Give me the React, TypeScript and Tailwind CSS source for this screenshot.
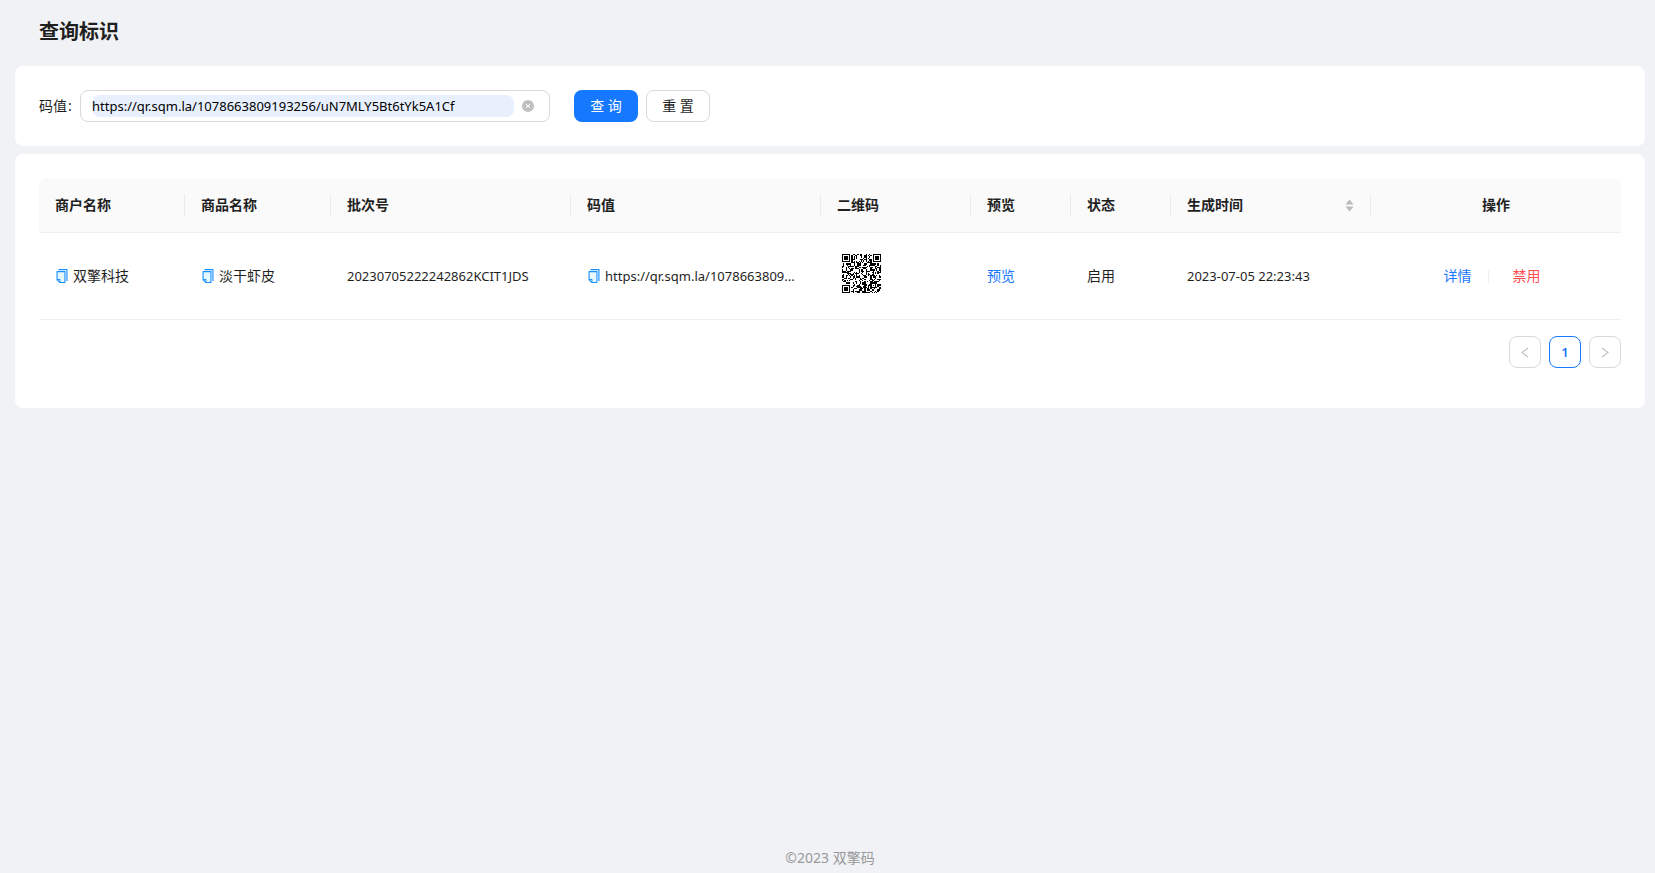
import { useState } from "react";
import type { ReactNode } from "react";

const QR_SIZE = 33;

function inFinder(x: number, y: number, ox: number, oy: number) {
  return x >= ox - 1 && x <= ox + 7 && y >= oy - 1 && y <= oy + 7;
}

function squareRing(x: number, y: number, cx: number, cy: number) {
  return Math.max(Math.abs(x - cx), Math.abs(y - cy));
}

function buildQrPath() {
  let seed = 20230705;
  let path = "";
  const corners = [
    [0, 0],
    [QR_SIZE - 7, 0],
    [0, QR_SIZE - 7],
  ];
  for (let y = 0; y < QR_SIZE; y++) {
    for (let x = 0; x < QR_SIZE; x++) {
      seed = (seed * 1103515245 + 12345) % 2147483648;
      let dark = (seed >> 12) % 100 < 49;
      const corner = corners.find(([ox, oy]) => inFinder(x, y, ox, oy));
      const align = squareRing(x, y, QR_SIZE - 7, QR_SIZE - 7);
      if (corner) {
        const ring = squareRing(x, y, corner[0] + 3, corner[1] + 3);
        dark = ring <= 1 || ring === 3;
      } else if (align <= 2) {
        dark = align !== 1;
      } else if (x === 6 || y === 6) {
        dark = (x + y) % 2 === 0;
      }
      if (dark) path += `M${x} ${y}h1v1h-1z`;
    }
  }
  return path;
}

const QR_PATH = buildQrPath();

function QrCode() {
  return (
    <svg
      role="img"
      aria-label="二维码"
      className="m-[5px] size-[39px]"
      viewBox={`0 0 ${QR_SIZE} ${QR_SIZE}`}
      shapeRendering="crispEdges"
    >
      <path d={QR_PATH} fill="#000" />
    </svg>
  );
}

function CopyIcon() {
  return (
    <svg viewBox="64 64 896 896" className="size-[14px]" aria-hidden="true">
      <path fill="#e6f7ff" d="M232 706h142c22.1 0 40 17.9 40 40v142h250V264H232v442z" />
      <path
        fill="#1890ff"
        d="M832 64H296c-4.4 0-8 3.6-8 8v56c0 4.4 3.6 8 8 8h496v688c0 4.4 3.6 8 8 8h56c4.4 0 8-3.6 8-8V96c0-17.7-14.3-32-32-32z"
      />
      <path
        fill="#1890ff"
        d="M704 192H192c-17.7 0-32 14.3-32 32v530.7c0 8.5 3.4 16.6 9.4 22.6l173.3 173.3c2.2 2.2 4.7 4 7.4 5.5v1.9h4.2c3.5 1.3 7.2 2 11 2H704c17.7 0 32-14.3 32-32V224c0-17.7-14.3-32-32-32zM350 856.2L263.9 770H350v86.2zM664 888H414V746c0-22.1-17.9-40-40-40H232V264h432v624z"
      />
    </svg>
  );
}

function Copyable({ children }: { children: ReactNode }) {
  return (
    <div className="flex items-center gap-1">
      <button type="button" aria-label="复制" className="shrink-0 cursor-pointer">
        <CopyIcon />
      </button>
      <span className="min-w-0 truncate">{children}</span>
    </div>
  );
}

function ClearIcon() {
  return (
    <svg viewBox="0 0 12 12" className="size-3" aria-hidden="true">
      <circle cx="6" cy="6" r="6" fill="#bfbfbf" />
      <path d="M4.2 4.2l3.6 3.6M7.8 4.2l-3.6 3.6" stroke="#fff" strokeWidth="1" strokeLinecap="round" />
    </svg>
  );
}

function SortIcon() {
  return (
    <svg viewBox="0 0 10 13" className="h-[13px] w-[10px]" aria-hidden="true">
      <path d="M4.5 0.5L8.5 5.5H0.5z" fill="#bababa" />
      <path d="M4.5 12.5L8.5 7.5H0.5z" fill="#bababa" />
    </svg>
  );
}

function Chevron({ d }: { d: string }) {
  return (
    <svg viewBox="0 0 12 12" className="size-3" fill="none" stroke="currentColor" aria-hidden="true">
      <path d={d} strokeWidth="1.1" />
    </svg>
  );
}

function HeadCell({ children, last = false }: { children: ReactNode; last?: boolean }) {
  return (
    <th
      scope="col"
      className={`relative h-[55px] border-b border-[#f0f0f0] bg-[#fafafa] px-4 font-bold text-[#1f1f1f] ${
        last
          ? "rounded-tr-lg text-center"
          : "text-left after:absolute after:top-4 after:right-0 after:h-[22px] after:w-px after:bg-[#ebebeb] first:rounded-tl-lg"
      }`}
    >
      {children}
    </th>
  );
}

const cell = "border-b border-[#f0f0f0] p-4";
const pageButton = "flex size-8 items-center justify-center rounded-lg border";

export default function App() {
  const initial = "https://qr.sqm.la/1078663809193256/uN7MLY5Bt6tYk5A1Cf";
  const [code, setCode] = useState(initial);

  return (
    <div className="flex min-h-screen flex-col bg-[#f0f2f5] pr-[10px] pl-[15px] font-['Noto_Sans','Noto_Sans_CJK_SC',sans-serif] text-[14px] leading-[22px] text-[#1f1f1f]">
      <header className="px-6 pt-4 pb-[18px]">
        <h1 className="text-[20px] leading-8 font-bold">查询标识</h1>
      </header>

      <main className="flex flex-1 flex-col gap-2">
        <form
          className="flex items-center rounded-lg bg-white p-6"
          onSubmit={(event) => event.preventDefault()}
        >
          <label htmlFor="code" className="w-[41px] whitespace-nowrap">
            码值<span className="pl-px">:</span>
          </label>
          <div className="flex h-8 w-[470px] items-center rounded-lg border border-[#d9d9d9] px-[11px]">
            <input
              id="code"
              type="text"
              value={code}
              onChange={(event) => setCode(event.target.value)}
              className="h-[22px] w-[422px] rounded-lg bg-[#e8f0fe] text-[13px] text-black outline-none"
            />
            <button
              type="button"
              aria-label="清除"
              className="ml-2 cursor-pointer"
              onClick={() => setCode("")}
            >
              <ClearIcon />
            </button>
          </div>
          <button
            type="submit"
            className="ml-6 h-8 w-16 cursor-pointer rounded-lg bg-[#1677ff] text-white"
          >
            查 询
          </button>
          <button
            type="button"
            className="ml-2 h-8 w-16 cursor-pointer rounded-lg border border-[#d9d9d9]"
            onClick={() => setCode(initial)}
          >
            重 置
          </button>
        </form>

        <section className="rounded-lg bg-white px-6 pt-6 pb-10">
          <table className="w-full table-fixed border-separate border-spacing-0">
            <colgroup>
              <col />
              <col />
              <col className="w-[240px]" />
              <col className="w-[250px]" />
              <col className="w-[150px]" />
              <col className="w-[100px]" />
              <col className="w-[100px]" />
              <col className="w-[200px]" />
              <col className="w-[250px]" />
            </colgroup>
            <thead>
              <tr>
                <HeadCell>商户名称</HeadCell>
                <HeadCell>商品名称</HeadCell>
                <HeadCell>批次号</HeadCell>
                <HeadCell>码值</HeadCell>
                <HeadCell>二维码</HeadCell>
                <HeadCell>预览</HeadCell>
                <HeadCell>状态</HeadCell>
                <HeadCell>
                  <div className="flex items-center justify-between">
                    生成时间
                    <button type="button" aria-label="排序" className="cursor-pointer">
                      <SortIcon />
                    </button>
                  </div>
                </HeadCell>
                <HeadCell last>操作</HeadCell>
              </tr>
            </thead>
            <tbody>
              <tr className="h-[87px]">
                <td className={cell}>
                  <Copyable>双擎科技</Copyable>
                </td>
                <td className={cell}>
                  <Copyable>淡干虾皮</Copyable>
                </td>
                <td className={`${cell} text-[13px]`}>20230705222242862KCIT1JDS</td>
                <td className={`${cell} text-[13px]`}>
                  <Copyable>https://qr.sqm.la/1078663809...</Copyable>
                </td>
                <td className="border-b border-[#f0f0f0] px-4 pt-4 pb-5 align-top">
                  <QrCode />
                </td>
                <td className={cell}>
                  <a href="#preview" className="text-[#1677ff]">
                    预览
                  </a>
                </td>
                <td className={cell}>启用</td>
                <td className={`${cell} text-[13px]`}>2023-07-05 22:23:43</td>
                <td className={cell}>
                  <div className="flex items-center justify-center">
                    <a href="#detail" className="text-[#1677ff]">
                      详情
                    </a>
                    <span className="mx-4 h-[13px] w-px bg-[#f0f0f0]" />
                    <button type="button" className="cursor-pointer px-2 text-[#ff4d4f]">
                      禁用
                    </button>
                  </div>
                </td>
              </tr>
            </tbody>
          </table>

          <nav aria-label="分页" className="mt-4 flex justify-end gap-2">
            <button
              type="button"
              disabled
              aria-label="上一页"
              className={`${pageButton} border-[#d9d9d9] text-[#bfbfbf]`}
            >
              <Chevron d="M9 2L3 6.5l6 4.5" />
            </button>
            <button
              type="button"
              aria-current="page"
              className={`${pageButton} border-[#1677ff] text-[13px] font-semibold text-[#1677ff]`}
            >
              1
            </button>
            <button
              type="button"
              disabled
              aria-label="下一页"
              className={`${pageButton} border-[#d9d9d9] text-[#bfbfbf]`}
            >
              <Chevron d="M3 2L9 6.5l-6 4.5" />
            </button>
          </nav>
        </section>
      </main>

      <footer className="pb-1 text-center text-[#999999]">©2023 双擎码</footer>
    </div>
  );
}
